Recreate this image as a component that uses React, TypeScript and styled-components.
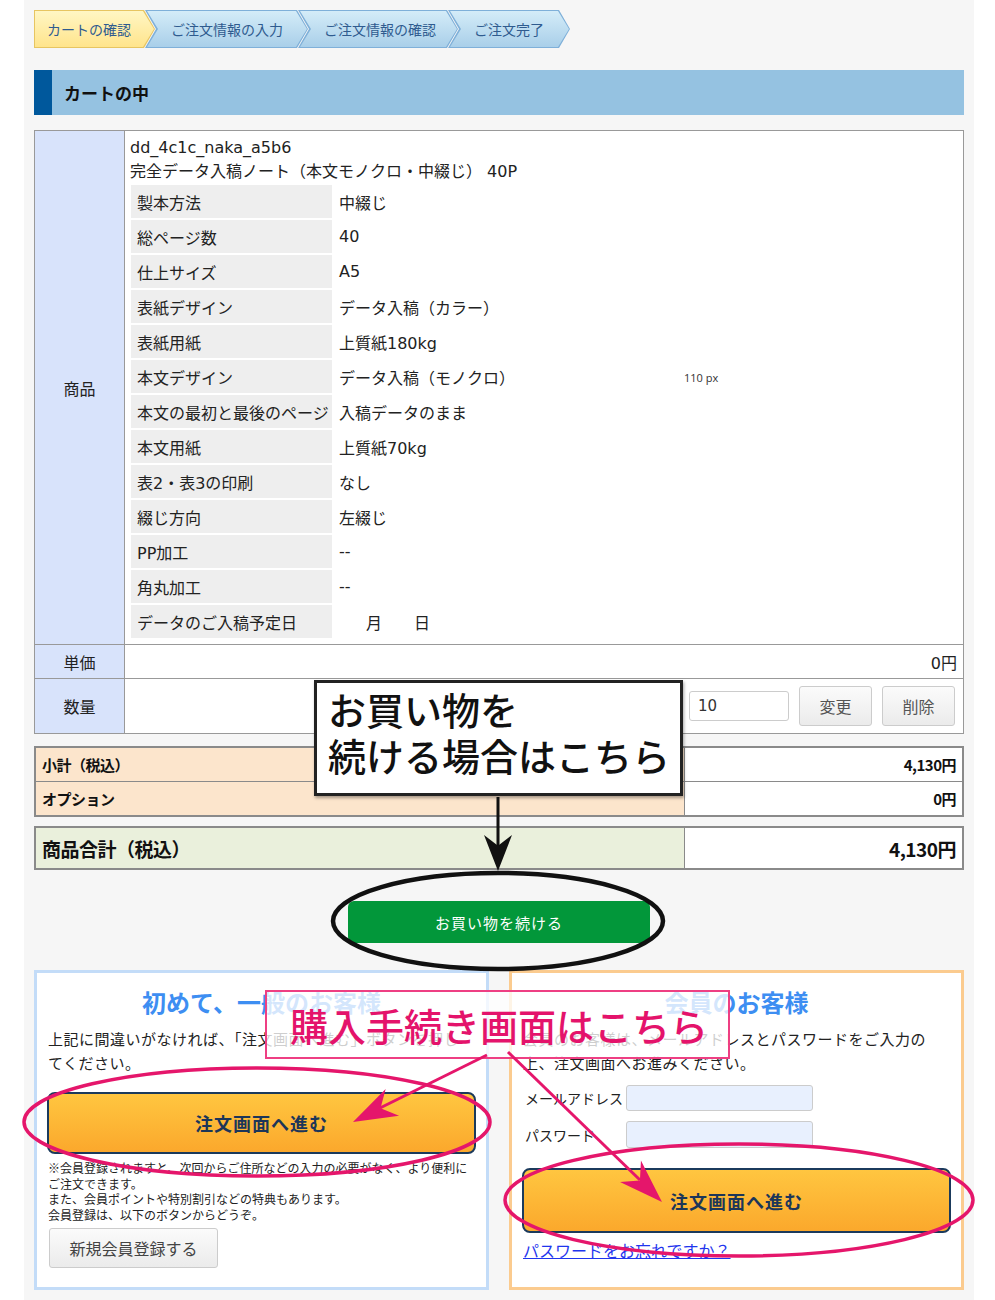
import React from 'react';
import styled, { createGlobalStyle } from 'styled-components';

// カート確認画面（注釈つきスクリーンショット）

const GlobalStyle = createGlobalStyle`
  html, body {
    margin: 0;
    padding: 0;
    background: #fff;
  }
  body {
    font-family: "DejaVu Sans", "Noto Sans CJK JP", "Noto Sans", sans-serif;
    color: #222;
  }
  * {
    box-sizing: border-box;
  }
`;

const Page = styled.div`
  position: relative;
  width: 995px;
  height: 1300px;
  overflow: hidden;
`;

const Container = styled.div`
  margin-left: 24px;
  width: 950px;
  min-height: 1300px;
  background: #f6f6f6;
  padding: 10px 10px 0;
`;

/* ---------- ステップ表示 ---------- */

const Steps = styled.ol`
  display: flex;
  margin: 0;
  padding: 0;
  list-style: none;
  height: 38px;
`;

const arrowShape = 'polygon(0 0, calc(100% - 11px) 0, 100% 50%, calc(100% - 11px) 100%, 0 100%)';
const notchShape =
  'polygon(0 0, calc(100% - 11px) 0, 100% 50%, calc(100% - 11px) 100%, 0 100%, 11px 50%)';

const Step = styled.li<{ $active?: boolean; $first?: boolean; $w: number }>`
  position: relative;
  flex: none;
  width: ${p => p.$w}px;
  height: 38px;
  margin-left: ${p => (p.$first ? 0 : -10)}px;
  display: flex;
  align-items: center;
  padding-left: ${p => (p.$first ? 13 : 26)}px;
  background: ${p => (p.$active ? '#e7c561' : '#7fb0d9')};
  clip-path: ${p => (p.$first ? arrowShape : notchShape)};
  font-family: "Noto Sans CJK JP", sans-serif;
  font-size: 14px;
  color: #2f5b8f;

  &::before {
    content: '';
    position: absolute;
    inset: 1px 1px 1px ${p => (p.$first ? 1 : 2)}px;
    clip-path: ${p => (p.$first ? arrowShape : notchShape)};
    background: ${p =>
      p.$active
        ? 'linear-gradient(#fff6c4, #ffe48c)'
        : 'linear-gradient(#d4ecf8, #a9cfe9)'};
  }
`;

const StepLabel = styled.span`
  position: relative;
`;

/* ---------- 見出し ---------- */

const SectionHead = styled.h2`
  margin: 22px 0 0;
  height: 45px;
  background: #95c2e1;
  border-left: 18px solid #00589c;
  padding-left: 12px;
  display: flex;
  align-items: center;
  font-family: "Noto Sans CJK JP", sans-serif;
  font-size: 17px;
  font-weight: bold;
  color: #111;
`;

/* ---------- カート表 ---------- */

const CartTable = styled.div`
  margin-top: 15px;
  display: grid;
  grid-template-columns: 90px 1fr;
  border: 1px solid #999;
  background: #fff;
`;

const HeadCell = styled.div<{ $last?: boolean }>`
  background: #d8e3fb;
  border-right: 1px solid #999;
  border-bottom: ${p => (p.$last ? 'none' : '1px solid #999')};
  display: flex;
  align-items: center;
  justify-content: center;
  font-size: 16px;
`;

const BodyCell = styled.div<{ $last?: boolean; $h?: number }>`
  border-bottom: ${p => (p.$last ? 'none' : '1px solid #999')};
  ${p => (p.$h ? `height: ${p.$h}px;` : '')}
  font-size: 16px;
`;

const ProductCell = styled(BodyCell)`
  padding: 5px 6px 6px 5px;
`;

const Line = styled.div`
  line-height: 24px;
`;

const SpecGrid = styled.div`
  margin: 1px 0 0 1px;
  display: grid;
  grid-template-columns: 201px 1fr;
  grid-auto-rows: 33px;
  gap: 2px;
`;

const SpecLabel = styled.div`
  background: #eeeeee;
  padding-left: 6px;
  display: flex;
  align-items: center;
`;

const SpecValue = styled.div`
  position: relative;
  padding-left: 5px;
  display: flex;
  align-items: center;
`;

const DatePart = styled.span<{ $gap: number }>`
  margin-left: ${p => p.$gap}px;
`;

const PxNote = styled.span`
  position: absolute;
  left: 350px;
  top: 10px;
  font-family: "Open Sans", sans-serif;
  font-size: 11px;
  color: #333;
`;

const PriceCell = styled(BodyCell)`
  display: flex;
  align-items: center;
  justify-content: flex-end;
  padding-right: 6px;
`;

const QtyCell = styled(BodyCell)`
  display: flex;
  align-items: center;
  justify-content: flex-end;
  gap: 10px;
  padding-right: 8px;
`;

const QtyInput = styled.div`
  width: 100px;
  height: 30px;
  border: 1px solid #ccc;
  border-radius: 3px;
  background: #fff;
  padding-left: 8px;
  display: flex;
  align-items: center;
  font-size: 15px;
  color: #333;
`;

const GrayButton = styled.button<{ $w: number; $h: number }>`
  width: ${p => p.$w}px;
  height: ${p => p.$h}px;
  border: 1px solid #ccc;
  border-radius: 3px;
  background: linear-gradient(#fbfbfb, #ebebeb);
  font-family: "Noto Sans CJK JP", sans-serif;
  font-size: 16px;
  color: #555;
  padding: 0;
`;

/* ---------- 合計 ---------- */

const SumTable = styled.div<{ $tone: 'sub' | 'total'; $top: number }>`
  margin-top: ${p => p.$top}px;
  display: grid;
  grid-template-columns: 649px 1fr;
  border: 2px solid #8a8a8a;
  background: #fff;
  font-family: "Noto Sans CJK JP", sans-serif;
  font-weight: bold;
  font-size: ${p => (p.$tone === 'total' ? 19 : 15)}px;
  letter-spacing: -0.5px;
  color: #111;
`;

const SumLabel = styled.div<{ $tone: 'sub' | 'total'; $h: number; $last?: boolean }>`
  height: ${p => p.$h}px;
  background: ${p => (p.$tone === 'total' ? '#eaf0dc' : '#fce5cc')};
  border-right: 1px solid #8a8a8a;
  border-bottom: ${p => (p.$last ? 'none' : '1px solid #8a8a8a')};
  padding-left: 6px;
  display: flex;
  align-items: center;
`;

const SumValue = styled.div<{ $h: number; $last?: boolean }>`
  height: ${p => p.$h}px;
  border-bottom: ${p => (p.$last ? 'none' : '1px solid #8a8a8a')};
  padding-right: 6px;
  display: flex;
  align-items: center;
  justify-content: flex-end;
`;

const ContinueButton = styled.button`
  display: block;
  margin: 31px auto 0;
  width: 302px;
  height: 42px;
  border: none;
  border-radius: 6px;
  background: #02973a;
  color: #fff;
  font-family: "Noto Sans CJK JP", sans-serif;
  font-size: 15px;
  letter-spacing: 1px;
`;

/* ---------- ログインパネル ---------- */

const Panels = styled.div`
  margin-top: 27px;
  display: grid;
  grid-template-columns: 455px 455px;
  gap: 20px;
`;

const Panel = styled.div<{ $tone: 'guest' | 'member' }>`
  height: 320px;
  background: #fff;
  border: 3px solid ${p => (p.$tone === 'guest' ? '#c3dcf8' : '#fbcb8f')};
  padding: 14px 11px 0;
  font-family: "Noto Sans CJK JP", sans-serif;
`;

const PanelTitle = styled.h3`
  margin: 0;
  text-align: center;
  font-size: 24px;
  line-height: 30px;
  font-weight: bold;
  color: #3d8ef2;
`;

const PanelText = styled.p`
  margin: 10px 0 0;
  font-size: 15px;
  line-height: 24px;
  letter-spacing: 0.5px;
  white-space: nowrap;
`;

const OrderButton = styled.button<{ $h: number; $top: number }>`
  display: block;
  width: calc(100% + 2px);
  margin: ${p => p.$top}px -1px 0;
  height: ${p => p.$h}px;
  border: 2px solid #1b3a5c;
  border-radius: 8px;
  background: linear-gradient(#ffc640, #fba82c);
  font-family: inherit;
  font-size: 18px;
  font-weight: bold;
  letter-spacing: 1px;
  color: #1c3659;
`;

const Notes = styled.p`
  margin: 6px 0 0;
  font-size: 12px;
  line-height: 15.5px;
  white-space: nowrap;
  color: #222;
`;

const RegisterButton = styled(GrayButton)`
  display: block;
  margin: 6px 0 0 1px;
  color: #444;
`;

const FormRow = styled.div<{ $top: number }>`
  margin-top: ${p => p.$top}px;
  display: flex;
  align-items: center;
  padding-left: 2px;
`;

const FormLabel = styled.span`
  width: 101px;
  flex: none;
  font-size: 14px;
  white-space: nowrap;
`;

const FormInput = styled.div<{ $h: number }>`
  width: 187px;
  height: ${p => p.$h}px;
  background: #e8f0fe;
  border: 1px solid #ccc;
  border-radius: 3px;
`;

const ForgotLink = styled.a`
  display: block;
  margin-top: 5px;
  font-size: 16px;
  line-height: 24px;
  color: #1f35ee;
  text-decoration: underline;
`;

/* ---------- 注釈 ---------- */

const Overlay = styled.svg`
  position: absolute;
  left: 0;
  top: 0;
  pointer-events: none;
`;

const CalloutBox = styled.div`
  position: absolute;
  left: 314px;
  top: 680px;
  width: 369px;
  height: 116px;
  background: #fff;
  border: 3px solid #222;
  box-shadow: 1px 2px 3px rgba(0, 0, 0, 0.35);
  padding: 3px 0 0 11px;
  font-family: "Noto Sans CJK JP", sans-serif;
  font-size: 38px;
  line-height: 46px;
  font-weight: 500;
  color: #111;
  white-space: nowrap;
`;

const PinkBox = styled.div`
  position: absolute;
  left: 265px;
  top: 990px;
  width: 465px;
  height: 69px;
  background: rgba(255, 255, 255, 0.78);
  border: 2px solid #ee3f83;
  padding-left: 23px;
  display: flex;
  align-items: center;
  font-family: "Noto Sans CJK JP", sans-serif;
  font-size: 38px;
  font-weight: 500;
  color: #e4136b;
  white-space: nowrap;
`;

const specs: [string, string][] = [
  ['製本方法', '中綴じ'],
  ['総ページ数', '40'],
  ['仕上サイズ', 'A5'],
  ['表紙デザイン', 'データ入稿（カラー）'],
  ['表紙用紙', '上質紙180kg'],
  ['本文デザイン', 'データ入稿（モノクロ）'],
  ['本文の最初と最後のページ', '入稿データのまま'],
  ['本文用紙', '上質紙70kg'],
  ['表2・表3の印刷', 'なし'],
  ['綴じ方向', '左綴じ'],
  ['PP加工', '--'],
  ['角丸加工', '--'],
  ['データのご入稿予定日', ''],
];

const steps = [
  { label: 'カートの確認', w: 121 },
  { label: 'ご注文情報の入力', w: 163 },
  { label: 'ご注文情報の確認', w: 160 },
  { label: 'ご注文完了', w: 122 },
];

// 矢印の先端（切れ込みつき）
const arrowHead = (fx: number, fy: number, tx: number, ty: number, len: number, half: number) => {
  const d = Math.hypot(tx - fx, ty - fy);
  const ux = (tx - fx) / d;
  const uy = (ty - fy) / d;
  const bx = tx - ux * len;
  const by = ty - uy * len;
  const nx = tx - ux * len * 0.7;
  const ny = ty - uy * len * 0.7;
  return `M${tx} ${ty} L${bx - uy * half} ${by + ux * half} L${nx} ${ny} L${bx + uy * half} ${by - ux * half} Z`;
};

const App: React.FC = () => {
  return (
    <Page>
      <GlobalStyle />
      <Container>
        <Steps>
          {steps.map((s, i) => (
            <Step key={s.label} $w={s.w} $first={i === 0} $active={i === 0}>
              <StepLabel>{s.label}</StepLabel>
            </Step>
          ))}
        </Steps>

        <SectionHead>カートの中</SectionHead>

        <CartTable>
          <HeadCell>商品</HeadCell>
          <ProductCell>
            <Line>dd_4c1c_naka_a5b6</Line>
            <Line>完全データ入稿ノート（本文モノクロ・中綴じ） 40P</Line>
            <SpecGrid>
              {specs.map(([k, v]) => (
                <React.Fragment key={k}>
                  <SpecLabel>{k}</SpecLabel>
                  <SpecValue>
                    {k === 'データのご入稿予定日' ? (
                      <>
                        <DatePart $gap={27}>月</DatePart>
                        <DatePart $gap={32}>日</DatePart>
                      </>
                    ) : (
                      v
                    )}
                    {k === '本文デザイン' && <PxNote>110 px</PxNote>}
                  </SpecValue>
                </React.Fragment>
              ))}
            </SpecGrid>
          </ProductCell>

          <HeadCell>単価</HeadCell>
          <PriceCell $h={34}>0円</PriceCell>

          <HeadCell $last>数量</HeadCell>
          <QtyCell $last $h={54}>
            <QtyInput>10</QtyInput>
            <GrayButton $w={73} $h={40}>変更</GrayButton>
            <GrayButton $w={73} $h={40}>削除</GrayButton>
          </QtyCell>
        </CartTable>

        <SumTable $tone="sub" $top={12}>
          <SumLabel $tone="sub" $h={34}>小計（税込）</SumLabel>
          <SumValue $h={34}>4,130円</SumValue>
          <SumLabel $tone="sub" $h={33} $last>オプション</SumLabel>
          <SumValue $h={33} $last>0円</SumValue>
        </SumTable>

        <SumTable $tone="total" $top={9}>
          <SumLabel $tone="total" $h={40} $last>商品合計（税込）</SumLabel>
          <SumValue $h={40} $last>4,130円</SumValue>
        </SumTable>

        <ContinueButton>お買い物を続ける</ContinueButton>

        <Panels>
          <Panel $tone="guest">
            <PanelTitle>初めて、一般のお客様</PanelTitle>
            <PanelText>
              上記に間違いがなければ、「注文画面へ進む」ボタンを押し
              <br />
              てください。
            </PanelText>
            <OrderButton $h={62} $top={17}>注文画面へ進む</OrderButton>
            <Notes>
              ※会員登録されますと、次回からご住所などの入力の必要がなく、より便利に
              <br />
              ご注文できます。
              <br />
              また、会員ポイントや特別割引などの特典もあります。
              <br />
              会員登録は、以下のボタンからどうぞ。
            </Notes>
            <RegisterButton $w={169} $h={40}>新規会員登録する</RegisterButton>
          </Panel>

          <Panel $tone="member">
            <PanelTitle>会員のお客様</PanelTitle>
            <PanelText>
              会員のお客様は、メールアドレスとパスワードをご入力の
              <br />
              上、注文画面へお進みください。
            </PanelText>
            <FormRow $top={10}>
              <FormLabel>メールアドレス</FormLabel>
              <FormInput $h={26} />
            </FormRow>
            <FormRow $top={10}>
              <FormLabel>パスワード</FormLabel>
              <FormInput $h={27} />
            </FormRow>
            <OrderButton $h={65} $top={20}>注文画面へ進む</OrderButton>
            <ForgotLink href="#">パスワードをお忘れですか？</ForgotLink>
          </Panel>
        </Panels>
      </Container>

      <CalloutBox>
        お買い物を
        <br />
        続ける場合はこちら
      </CalloutBox>

      <PinkBox>購入手続き画面はこちら</PinkBox>

      <Overlay width="995" height="1300" viewBox="0 0 995 1300">
        <line x1="498" y1="797" x2="498" y2="848" stroke="#111" strokeWidth="3" />
        <path d={arrowHead(498, 797, 498, 871, 36, 14)} fill="#111" />
        <ellipse cx="498" cy="921" rx="165" ry="48" fill="none" stroke="#111" strokeWidth="4.5" />

        <ellipse cx="257" cy="1122" rx="233" ry="54" fill="none" stroke="#e5166b" strokeWidth="3.5" />
        <ellipse cx="739" cy="1200" rx="234" ry="56" fill="none" stroke="#e5166b" strokeWidth="3.5" />

        <line x1="487" y1="1055" x2="380" y2="1108" stroke="#e5166b" strokeWidth="3" />
        <path d={arrowHead(487, 1055, 353, 1122, 44, 15)} fill="#e5166b" />
        <line x1="508" y1="1052" x2="640" y2="1180" stroke="#e5166b" strokeWidth="3" />
        <path d={arrowHead(508, 1052, 662, 1202, 44, 15)} fill="#e5166b" />
      </Overlay>
    </Page>
  );
};

export default App;
